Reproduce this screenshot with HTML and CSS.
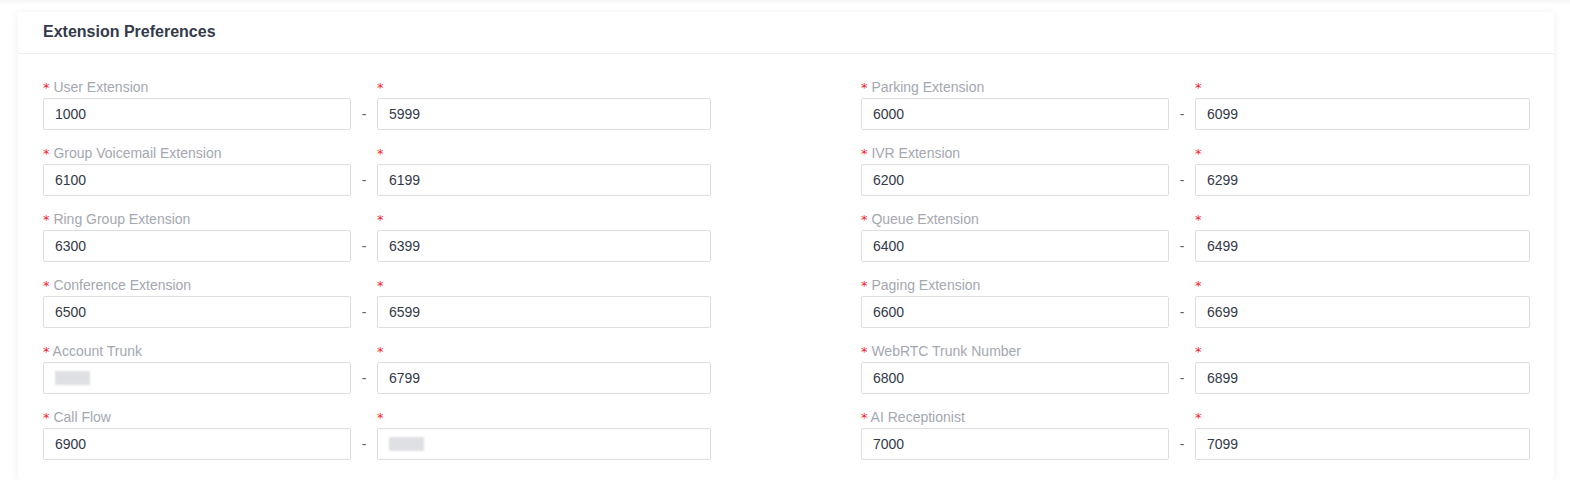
FILE: index.html
```html
<!DOCTYPE html>
<html lang="en">
<head>
  <meta charset="UTF-8">
  <title>Extension Preferences</title>
  <link rel="stylesheet" href="styles.css">
</head>
<body>
  <div class="top-strip"></div>
  <div class="card">
    <div class="card-header">Extension Preferences</div>
    <div class="card-body">
      <div class="range-grid">
        <div class="range">
          <label><span class="req">*</span> User Extension</label>
          <label><span class="req">*</span></label>
          <div class="input">1000</div><span class="dash">-</span><div class="input">5999</div>
        </div>
        <div class="range">
          <label><span class="req">*</span> Parking Extension</label>
          <label><span class="req">*</span></label>
          <div class="input">6000</div><span class="dash">-</span><div class="input">6099</div>
        </div>
        <div class="range">
          <label><span class="req">*</span> Group Voicemail Extension</label>
          <label><span class="req">*</span></label>
          <div class="input">6100</div><span class="dash">-</span><div class="input">6199</div>
        </div>
        <div class="range">
          <label><span class="req">*</span> IVR Extension</label>
          <label><span class="req">*</span></label>
          <div class="input">6200</div><span class="dash">-</span><div class="input">6299</div>
        </div>
        <div class="range">
          <label><span class="req">*</span> Ring Group Extension</label>
          <label><span class="req">*</span></label>
          <div class="input">6300</div><span class="dash">-</span><div class="input">6399</div>
        </div>
        <div class="range">
          <label><span class="req">*</span> Queue Extension</label>
          <label><span class="req">*</span></label>
          <div class="input">6400</div><span class="dash">-</span><div class="input">6499</div>
        </div>
        <div class="range">
          <label><span class="req">*</span> Conference Extension</label>
          <label><span class="req">*</span></label>
          <div class="input">6500</div><span class="dash">-</span><div class="input">6599</div>
        </div>
        <div class="range">
          <label><span class="req">*</span> Paging Extension</label>
          <label><span class="req">*</span></label>
          <div class="input">6600</div><span class="dash">-</span><div class="input">6699</div>
        </div>
        <div class="range">
          <label><span class="req">*</span> Account Trunk</label>
          <label><span class="req">*</span></label>
          <div class="input"><span class="blurred"></span></div><span class="dash">-</span><div class="input">6799</div>
        </div>
        <div class="range">
          <label><span class="req">*</span> WebRTC Trunk Number</label>
          <label><span class="req">*</span></label>
          <div class="input">6800</div><span class="dash">-</span><div class="input">6899</div>
        </div>
        <div class="range">
          <label><span class="req">*</span> Call Flow</label>
          <label><span class="req">*</span></label>
          <div class="input">6900</div><span class="dash">-</span><div class="input"><span class="blurred"></span></div>
        </div>
        <div class="range">
          <label><span class="req">*</span> AI Receptionist</label>
          <label><span class="req">*</span></label>
          <div class="input">7000</div><span class="dash">-</span><div class="input">7099</div>
        </div>
      </div>
    </div>
  </div>
</body>
</html>
```

FILE: styles.css
```css
* {
  box-sizing: border-box;
  margin: 0;
  padding: 0;
}

body {
  font-family: "Liberation Sans", Arial, sans-serif;
  background-color: #ffffff;
  color: #333a47;
  padding: 0 16px 0 18px;
}

.top-strip {
  height: 3px;
  margin: 0 -16px 9px -18px;
  background: linear-gradient(#f3f4f6, #fbfbfc);
}

.card {
  width: 1536px;
  background-color: white;
  border-radius: 4px;
  box-shadow: 0 1px 8px rgba(0, 0, 0, 0.07);
}

.card-header {
  height: 42px;
  padding: 11px 25px 0;
  font-size: 16px;
  font-weight: bold;
  color: #333a4a;
  border-bottom: 1px solid #eeeff1;
}

.card-body {
  padding: 22px 24px 8px 25px;
}

.range-grid {
  display: grid;
  grid-template-columns: 668px 669px;
  justify-content: space-between;
}

.range {
  display: grid;
  grid-template-columns: 308px 26px 1fr;
  grid-template-rows: 22px 32px;
  margin-bottom: 12px;
}

.range label {
  font-size: 14px;
  line-height: 22px;
  color: #a4a8b0;
}

.range label:nth-child(2) {
  grid-column: 3;
}

.req {
  color: #f5222d;
  font-family: SimSun, "DejaVu Sans", sans-serif;
  font-size: 13px;
}

.input {
  height: 32px;
  padding: 0 11px;
  border: 1px solid #dcdee2;
  border-radius: 2px;
  font-size: 14px;
  line-height: 30px;
  color: #333a47;
}

.dash {
  text-align: center;
  line-height: 32px;
  font-size: 14px;
  color: #606266;
}

.blurred {
  display: inline-block;
  width: 35px;
  height: 14px;
  margin-top: 8px;
  vertical-align: top;
  background-color: #dfe0e4;
  filter: blur(1.2px);
}
```
